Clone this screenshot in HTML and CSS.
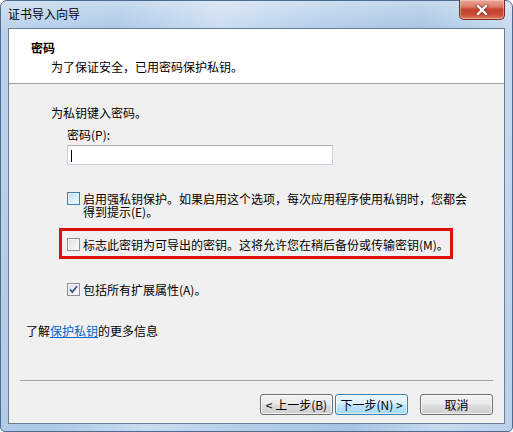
FILE: index.html
```html
<!DOCTYPE html>
<html>
<head>
<meta charset="utf-8">
<link rel="stylesheet" href="styles.css">
</head>
<body>
<div class="window">
  <div class="titlebar">
    <span class="title">证书导入向导</span>
    <div class="close">
      <svg width="16" height="12" viewBox="0 0 16 12">
        <path d="M4 2 L12 10 M12 2 L4 10" stroke="#5a1a12" stroke-width="4" stroke-linecap="square" opacity="0.55"/>
        <path d="M4 2 L12 10 M12 2 L4 10" stroke="#ffffff" stroke-width="2.4" stroke-linecap="square"/>
      </svg>
    </div>
  </div>
  <div class="client">
    <div class="header">
      <div class="h-title">密码</div>
      <div class="h-sub">为了保证安全，已用密码保护私钥。</div>
    </div>
    <div class="content">
      <div class="intro">为私钥键入密码。</div>
      <div class="label">密码(P):</div>
      <div class="textbox"><span class="caret"></span></div>
      <div class="row">
        <span class="cb cb-hot"></span>
        <span class="row-text wrap">启用强私钥保护。如果启用这个选项，每次应用程序使用私钥时，您都会得到提示(E)。</span>
      </div>
      <div class="redbox">
        <div class="row inner">
          <span class="cb"></span>
          <span class="row-text">标志此密钥为可导出的密钥。这将允许您在稍后备份或传输密钥(M)。</span>
        </div>
      </div>
      <div class="row last">
        <span class="cb">
          <svg width="11" height="11" viewBox="0 0 11 11"><path d="M2 5.5 L4.3 8 L9 2.2" fill="none" stroke="#3a5192" stroke-width="1.8"/></svg>
        </span>
        <span class="row-text">包括所有扩展属性(A)。</span>
      </div>
      <div class="more">了解<a class="link">保护私钥</a>的更多信息</div>
    </div>
    <div class="footer">
      <div class="sep"></div>
      <div class="buttons">
        <div class="btn">&lt; 上一步(B)</div>
        <div class="btn btn-default">下一步(N) &gt;</div>
        <div class="btn btn-cancel">取消</div>
      </div>
    </div>
  </div>
</div>
</body>
</html>
```
FILE: styles.css
```css
* { box-sizing: border-box; }
html, body { margin: 0; padding: 0; background: #ffffff; }
body {
  font-family: "Noto Sans CJK SC", "Noto Sans", sans-serif;
  font-size: 12px;
  color: #000;
}
.window {
  width: 513px;
  height: 432px;
  padding: 0 7px 7px 7px;
  border-radius: 7px 7px 5px 5px;
  border: 1px solid #4f6b8e;
  background:
    linear-gradient(180deg, rgba(255,255,255,0.35) 0%, rgba(255,255,255,0) 30px),
    linear-gradient(100deg, #bcd3ec 0%, #aac7e6 20%, #c9dcf0 38%, #b3cde9 55%, #a6c3e3 72%, #c7daef 88%, #b9d1ea 100%);
  display: flex;
  flex-direction: column;
}
.titlebar {
  height: 27px;
  display: flex;
  justify-content: space-between;
  align-items: flex-start;
}
.title {
  margin-top: 6px;
  line-height: 14px;
  color: #000;
}
.close {
  width: 46px;
  height: 20px;
  margin-top: -1px;
  margin-right: 0;
  border: 1px solid #7a2a20;
  border-top: none;
  border-radius: 0 0 5px 5px;
  background: linear-gradient(180deg, #e9a899 0%, #dd7b66 35%, #c5432f 50%, #c94a33 75%, #df7f5f 100%);
  box-shadow: inset 0 0 0 1px rgba(255,220,210,0.45);
  display: flex;
  align-items: center;
  justify-content: center;
}
.client {
  flex: 1;
  border: 1px solid #6b7d93;
  background: #f0f0f0;
  display: flex;
  flex-direction: column;
}
.header {
  height: 55px;
  background: #ffffff;
  border-bottom: 1px solid #a0a0a0;
  padding-top: 12px;
}
.h-title {
  margin-left: 22px;
  font-weight: bold;
  line-height: 14px;
}
.h-sub {
  margin-left: 42px;
  margin-top: 5px;
  line-height: 14px;
}
.content {
  flex: 1;
  padding-top: 22px;
}
.intro {
  margin-left: 42px;
  line-height: 14px;
}
.label {
  margin-left: 58px;
  margin-top: 8px;
  line-height: 14px;
}
.textbox {
  margin-left: 58px;
  margin-top: 3px;
  width: 266px;
  height: 20px;
  background: #fff;
  border: 1px solid #c5d0dc;
  border-top-color: #abadb3;
  padding: 4px 0 0 3px;
}
.caret {
  display: block;
  width: 1px;
  height: 12px;
  background: #000;
}
.row {
  display: flex;
  align-items: flex-start;
  margin-left: 58px;
  margin-top: 27px;
  line-height: 13px;
}
.row-text { margin-left: 3px; white-space: nowrap; }
.row-text.wrap { white-space: normal; width: 390px; }
.cb {
  flex: none;
  width: 13px;
  height: 13px;
  border: 1px solid #8e8f8f;
  background: linear-gradient(135deg, #dcdcdc 0%, #f0f0f0 60%, #fcfcfc 100%);
  box-shadow: inset 0 0 0 1px #f4f4f4;
  display: flex;
  align-items: center;
  justify-content: center;
}
.cb-hot {
  border-color: #3c7fb1;
  background: linear-gradient(135deg, #b9dcf2 0%, #def0fa 60%, #f4faff 100%);
  box-shadow: inset 0 0 0 1px #e6f3fb;
}
.redbox {
  margin-left: 50px;
  margin-top: 10px;
  width: 394px;
  border: 3px solid #e20e0e;
  padding: 7px 0 5px 5px;
}
.row.inner { margin: 0; }
.row.last { margin-top: 24px; }
.more {
  margin-left: 17px;
  margin-top: 28px;
  line-height: 14px;
}
.link {
  color: #0066cc;
  text-decoration: underline;
}
.footer {
  height: 43px;
  display: flex;
  flex-direction: column;
}
.sep {
  height: 1px;
  margin: 0 11px 0 11px;
  background: #a0a0a0;
}
.buttons {
  display: flex;
  justify-content: flex-end;
  margin-top: 13px;
  padding-right: 11px;
  gap: 2px;
}
.btn {
  width: 73px;
  height: 21px;
  border: 1px solid #707070;
  border-radius: 3px;
  background: linear-gradient(180deg, #f2f2f2 0%, #ebebeb 48%, #dddddd 52%, #cfcfcf 100%);
  box-shadow: inset 0 0 0 1px rgba(255,255,255,0.7);
  display: flex;
  align-items: center;
  justify-content: center;
  line-height: 14px;
}
.btn-default {
  border-color: #3c7fb1;
  background: linear-gradient(180deg, #eaf6fd 0%, #d9f0fc 48%, #bee6fd 52%, #a7d9f5 100%);
  box-shadow: inset 0 0 0 1px rgba(255,255,255,0.6);
}
.btn-cancel { margin-left: 10px; }
```
